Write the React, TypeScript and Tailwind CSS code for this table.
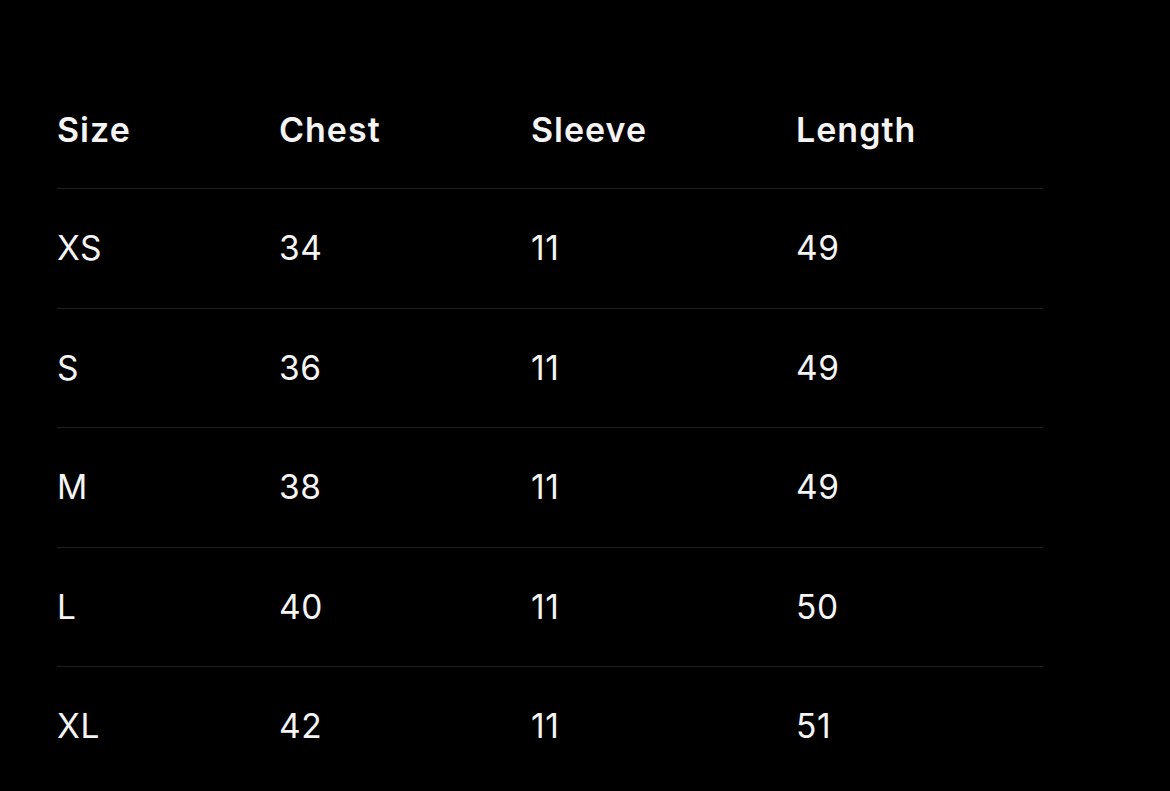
const headers = ["Size", "Chest", "Sleeve", "Length"];

const rows = [
  ["XS", "34", "11", "49"],
  ["S", "36", "11", "49"],
  ["M", "38", "11", "49"],
  ["L", "40", "11", "50"],
  ["XL", "42", "11", "51"],
];

const cols = "grid grid-cols-[222px_252px_265px_1fr] items-center";

export default function App() {
  return (
    <div className="min-h-[791px] w-full bg-black pt-[71px] pl-[57px] font-['Inter',sans-serif] text-[#f4f4f4]">
      <div className="w-[986px]">
        <div className={`${cols} h-[117px] text-[34px] font-semibold tracking-[1px]`}>
          {headers.map((h) => (
            <div key={h}>{h}</div>
          ))}
        </div>
        {rows.map((row) => (
          <div
            key={row[0]}
            className={`${cols} h-[119.5px] border-t border-[#202022] text-[33.5px] font-normal tracking-[0.6px]`}
          >
            {row.map((cell, i) => (
              <div key={i}>{cell}</div>
            ))}
          </div>
        ))}
      </div>
    </div>
  );
}
